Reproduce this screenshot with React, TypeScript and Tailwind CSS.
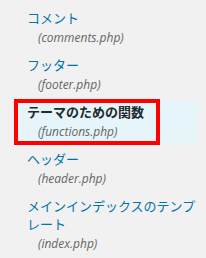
const files = [
  { title: 'コメント', file: '(comments.php)' },
  { title: 'フッター', file: '(footer.php)' },
  { title: 'テーマのための関数', file: '(functions.php)', current: true },
  { title: 'ヘッダー', file: '(header.php)' },
  { title: 'メインインデックスのテンプレート', file: '(index.php)' },
];

export default function App() {
  return (
    <div className="min-h-[258px] w-[206px] bg-[#f1f1f1] pt-[6px] font-['Noto_Sans_CJK_JP',sans-serif]">
      <ul className="ml-[15px] w-[183px] flex flex-col gap-[4px]">
        {files.map((f) => (
          <li
            key={f.file}
            className={f.current ? 'relative bg-[#e5f5fa] pl-[12px] py-[3px]' : 'pl-[12px] py-[3px]'}
          >
            <div
              className={
                f.current
                  ? 'text-[13px] leading-[18px] font-bold text-[#23282d]'
                  : 'text-[13px] leading-[18px] text-[#0073aa]'
              }
            >
              {f.title}
            </div>
            <div className="mt-[3px] pl-[11px] text-[12px] leading-[16px] italic text-[#666] font-['Open_Sans',sans-serif]">
              {f.file}
            </div>
            {f.current && (
              <div className="absolute -left-[1px] -top-[1px] w-[146px] h-[46px] border-[4px] border-[#ff0000]" />
            )}
          </li>
        ))}
      </ul>
    </div>
  );
}
